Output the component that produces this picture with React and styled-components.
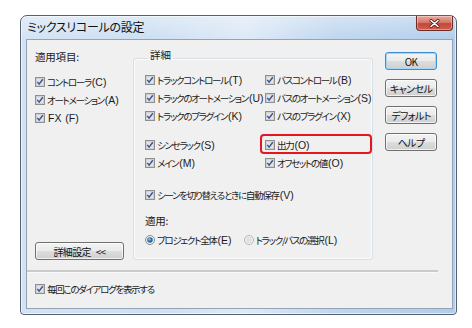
import React from "react"
import styled, { createGlobalStyle } from "styled-components"

const GlobalStyle = createGlobalStyle`
  html, body {
    margin: 0;
    padding: 0;
    background: #ffffff;
  }
  body {
    font-family: "Noto Sans CJK JP", "Liberation Sans", sans-serif;
    font-feature-settings: "palt";
    color: #1a1a1a;
  }
`

const Window = styled.div`
  margin: 15px 0 0 20px;
  width: 437px;
  height: 300px;
  box-sizing: border-box;
  border: 1px solid #56626f;
  border-radius: 7px 7px 4px 4px;
  padding: 0 3px 5px 5px;
  display: flex;
  flex-direction: column;
  background:
    linear-gradient(to bottom, rgba(255, 255, 255, 0.35), rgba(255, 255, 255, 0) 24px),
    linear-gradient(to right, #d3e3f4 0%, #cddff2 30%, #dde9f7 52%, #bfd6ef 72%, #b1cdeb 100%);
  box-shadow: inset 0 0 0 1px rgba(255, 255, 255, 0.6);
`

const TitleBar = styled.div`
  height: 23px;
  display: flex;
  justify-content: space-between;
  align-items: flex-start;
`

const Title = styled.span`
  padding: 3px 0 0 1px;
  font-size: 12px;
  line-height: 15px;
  letter-spacing: -0.3px;
  color: #111;
`

const CloseButton = styled.div`
  width: 37px;
  height: 15px;
  box-sizing: border-box;
  border: 1px solid #6b2b26;
  border-top: none;
  border-radius: 0 0 4px 4px;
  background: linear-gradient(to bottom, #e9a99b 0%, #d57a6a 45%, #c4473a 55%, #cf5f4c 100%);
  box-shadow: inset 0 0 0 1px rgba(255, 255, 255, 0.35);
  display: flex;
  align-items: center;
  justify-content: center;
`

const Client = styled.div`
  flex: 1;
  background: #f0f0f0;
  border: 1px solid #94a4b6;
  display: flex;
  flex-direction: column;
`

const Main = styled.div`
  display: flex;
  height: 211px;
  padding: 9px 15px 0 8px;
`

const LeftCol = styled.div`
  width: 98px;
  flex-shrink: 0;
  display: flex;
  flex-direction: column;
`

const Heading = styled.div`
  font-size: 10.5px;
  line-height: 16px;
  letter-spacing: -0.2px;
  margin-bottom: ${(p) => p.$gap || 0}px;
`

const Group = styled.fieldset`
  width: 240px;
  min-width: 0;
  flex-shrink: 0;
  box-sizing: border-box;
  margin: 0;
  padding: 4px 0 5px 11px;
  border: 1px solid #d5dfe5;
  border-radius: 3px;
  box-shadow: inset 0 0 0 1px #fafbfc;
`

const Legend = styled.legend`
  font-size: 10.5px;
  line-height: 12px;
  padding: 0 2px 6px 2px;
  margin-left: 3px;
`

const Grid = styled.div`
  display: grid;
  grid-template-columns: 120px 1fr;
  margin-bottom: ${(p) => p.$gap || 0}px;
`

const Row = styled.label`
  position: relative;
  display: flex;
  align-items: center;
  gap: 2px;
  height: 18px;
  font-size: 9.5px;
  letter-spacing: -1.3px;
  white-space: nowrap;
  margin-bottom: ${(p) => p.$gap || 0}px;

  & > svg {
    flex-shrink: 0;
  }

  ${(p) =>
    p.$marked &&
    `
    &::after {
      content: "";
      position: absolute;
      left: -5px;
      top: -2px;
      width: 112px;
      height: 20px;
      box-sizing: border-box;
      border: 2px solid #e5161d;
      border-radius: 4px;
    }
  `}
`

const Key = styled.span`
  font-family: "Liberation Sans", "DejaVu Sans", sans-serif;
  font-size: 10.5px;
  letter-spacing: 0;
  margin-left: 1px;
`

const RadioRow = styled.div`
  display: flex;
  gap: 12px;
`

const Push = styled.div`
  height: 18px;
  box-sizing: border-box;
  border: 1px solid ${(p) => (p.$default ? "#3c8ed3" : "#707070")};
  border-radius: 3px;
  background: linear-gradient(to bottom, #f3f3f3 0%, #ebebeb 48%, #dddddd 52%, #cfcfcf 100%);
  box-shadow: inset 0 0 0 1px ${(p) => (p.$default ? "#a5d6f5" : "rgba(255,255,255,0.7)")};
  display: flex;
  align-items: center;
  justify-content: center;
  font-size: 10px;
  letter-spacing: -0.6px;
  white-space: nowrap;
  color: #111;
`

const DetailButton = styled(Push)`
  width: 89px;
  margin-top: auto;
  word-spacing: 3px;
`

const ButtonCol = styled.div`
  width: 52px;
  flex-shrink: 0;
  margin: 3px 0 0 12px;
  display: flex;
  flex-direction: column;
  gap: 9px;
`

const Separator = styled.div`
  height: 2px;
  margin: 10px 14px 0 0;
  background: #cbcbcb;
  border-bottom: 1px solid #f9f9f9;
`

const Footer = styled.div`
  padding: 7px 0 0 8px;
`

const CheckBox = () => (
  <svg width="10" height="10" viewBox="0 0 10 10">
    <rect x="0.5" y="0.5" width="9" height="9" fill="#fdfdfd" stroke="#8e8f8f" />
    <rect x="1.5" y="1.5" width="7" height="7" fill="#e4e4e4" stroke="#d0d0d0" />
    <path d="M2.3 4.9 L4.1 7.1 L7.8 2.3" fill="none" stroke="#3b5497" strokeWidth="1.5" />
  </svg>
)

const Radio = ({ on }) => (
  <svg width="10" height="10" viewBox="0 0 10 10">
    <circle cx="5" cy="5" r="4.5" fill="#f1f1f1" stroke={on ? "#8a8a8a" : "#b5b5b5"} />
    {on ? (
      <>
        <circle cx="5" cy="5" r="2.8" fill="#2c69ab" />
        <circle cx="4.5" cy="4.4" r="1.2" fill="#8dc2ee" />
      </>
    ) : (
      <circle cx="5" cy="5" r="3" fill="#e2e2e2" />
    )}
  </svg>
)

const Label = ({ text, k }) => (
  <span>
    {text}
    {k && <Key>({k})</Key>}
  </span>
)

const Check = ({ text, k, ...rest }) => (
  <Row {...rest}>
    <CheckBox />
    <Label text={text} k={k} />
  </Row>
)

const Option = ({ text, k, on }) => (
  <Row>
    <Radio on={on} />
    <Label text={text} k={k} />
  </Row>
)

const App = () => {
  return (
    <>
      <GlobalStyle />
      <Window>
        <TitleBar>
          <Title>ミックスリコールの設定</Title>
          <CloseButton>
            <svg width="11" height="9" viewBox="0 0 11 9">
              <path d="M2 1.5 L9 7.5 M9 1.5 L2 7.5" stroke="#5a1c16" strokeWidth="3" strokeLinecap="round" />
              <path d="M2 1.5 L9 7.5 M9 1.5 L2 7.5" stroke="#ffffff" strokeWidth="1.6" strokeLinecap="round" />
            </svg>
          </CloseButton>
        </TitleBar>
        <Client>
          <Main>
            <LeftCol>
              <Heading $gap={8}>適用項目:</Heading>
              <Check text="コントローラ" k="C" />
              <Check text="オートメーション" k="A" />
              <Check text={<Key>FX </Key>} k="F" />
              <DetailButton>詳細設定 &lt;&lt;</DetailButton>
            </LeftCol>
            <Group>
              <Legend>詳細</Legend>
              <Grid $gap={11}>
                <Check text="トラックコントロール" k="T" />
                <Check text="バスコントロール" k="B" />
                <Check text="トラックのオートメーション" k="U" />
                <Check text="バスのオートメーション" k="S" />
                <Check text="トラックのプラグイン" k="K" />
                <Check text="バスのプラグイン" k="X" />
              </Grid>
              <Grid $gap={14}>
                <Check text="シンセラック" k="S" />
                <Check text="出力" k="O" $marked />
                <Check text="メイン" k="M" />
                <Check text="オフセットの値" k="O" />
              </Grid>
              <Check text="シーンを切り替えるときに自動保存" k="V" $gap={9} />
              <Heading $gap={2}>適用:</Heading>
              <RadioRow>
                <Option text="プロジェクト全体" k="E" on />
                <Option text="トラック/バスの選択" k="L" />
              </RadioRow>
            </Group>
            <ButtonCol>
              <Push $default>OK</Push>
              <Push>キャンセル</Push>
              <Push>デフォルト</Push>
              <Push>ヘルプ</Push>
            </ButtonCol>
          </Main>
          <Separator />
          <Footer>
            <Check text="毎回このダイアログを表示する" />
          </Footer>
        </Client>
      </Window>
    </>
  )
}

export default App
